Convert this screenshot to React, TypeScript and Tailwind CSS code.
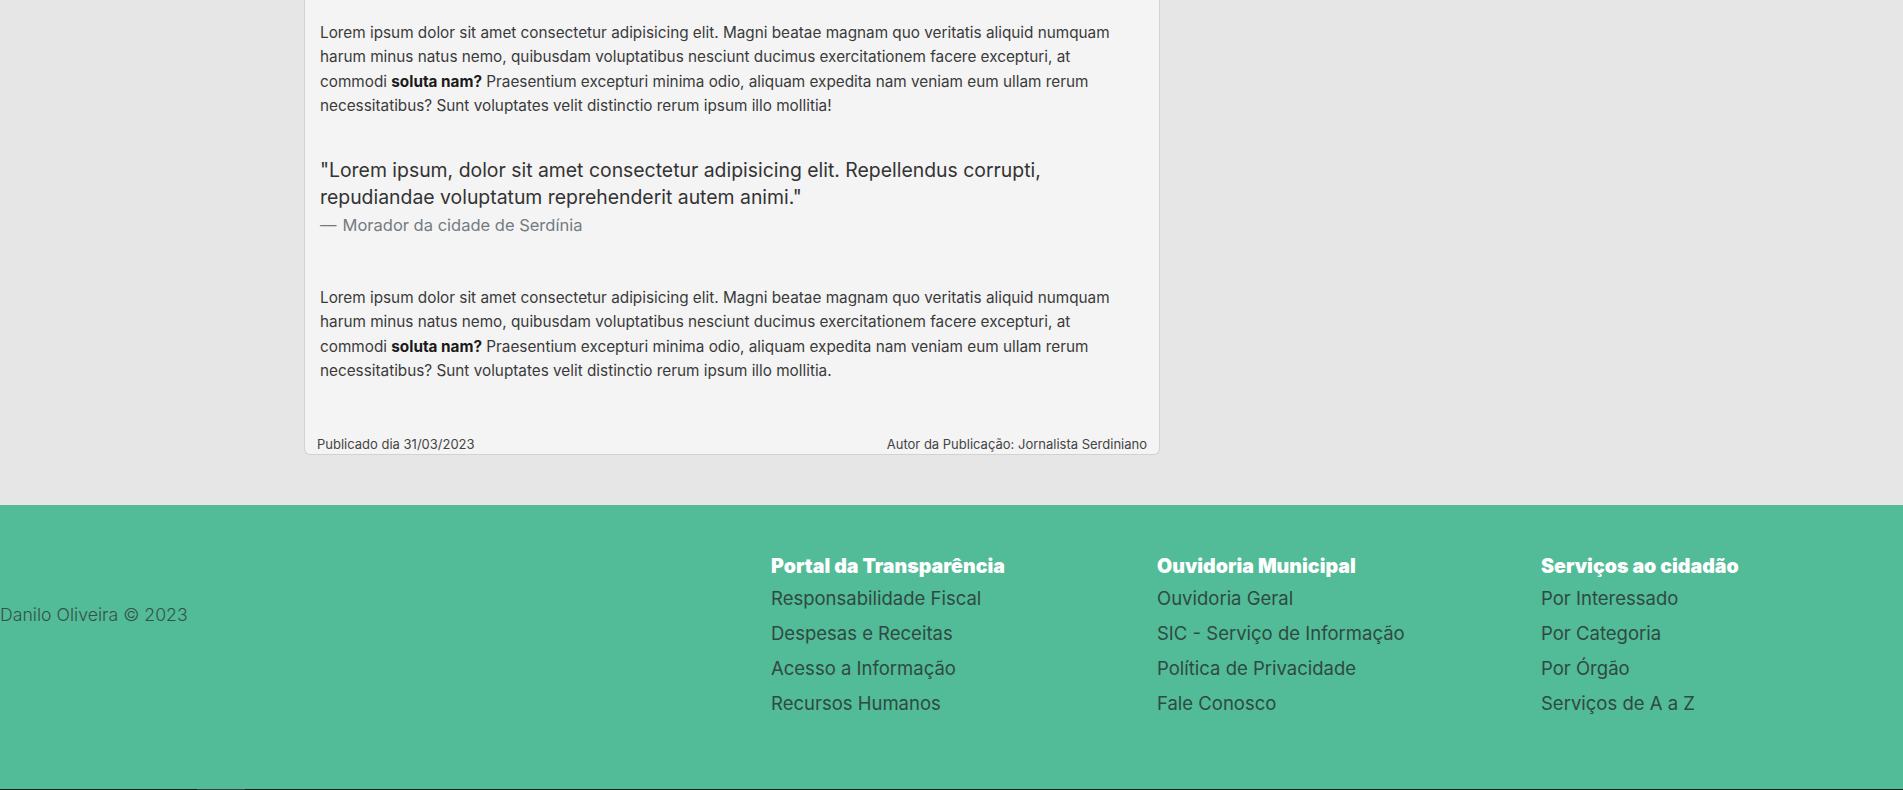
const lorem1 = "Lorem ipsum dolor sit amet consectetur adipisicing elit. Magni beatae magnam quo veritatis aliquid numquam harum minus natus nemo, quibusdam voluptatibus nesciunt ducimus exercitationem facere excepturi, at commodi";
const lorem2 = "Praesentium excepturi minima odio, aliquam expedita nam veniam eum ullam rerum necessitatibus? Sunt voluptates velit distinctio rerum ipsum illo mollitia";

const columns = [
  {
    title: "Portal da Transparência",
    links: ["Responsabilidade Fiscal", "Despesas e Receitas", "Acesso a Informação", "Recursos Humanos"],
  },
  {
    title: "Ouvidoria Municipal",
    links: ["Ouvidoria Geral", "SIC - Serviço de Informação", "Política de Privacidade", "Fale Conosco"],
  },
  {
    title: "Serviços ao cidadão",
    links: ["Por Interessado", "Por Categoria", "Por Órgão", "Serviços de A a Z"],
  },
];

function Paragraph({ end }: { end: string }) {
  return (
    <p className="pr-[18px] text-[15.3px] leading-[24.3px] text-[#3a3a3a]">
      {lorem1} <strong className="font-bold text-[#1a1a1a]">soluta nam?</strong> {lorem2}
      {end}
    </p>
  );
}

export default function App() {
  return (
    <div className="min-h-screen bg-[#e6e6e6] font-['Inter',sans-serif] flex flex-col">
      <main className="pl-[304px] pb-[50px]">
        <article className="w-[856px] bg-[#f4f4f4] border border-t-0 border-[#d2d2d2] rounded-b-[6px] px-[15px] pt-[21px] pb-[1px]">
          <Paragraph end="!" />
          <blockquote className="mt-[39px]">
            <p className="text-[19.4px] leading-[27px] text-[#333]">
              "Lorem ipsum, dolor sit amet consectetur adipisicing elit. Repellendus corrupti, repudiandae voluptatum reprehenderit autem animi."
            </p>
            <footer className="mt-[2px] text-[16.5px] leading-[24px] text-[#737b82]">
              <span className="mr-[6px]">—</span>Morador da cidade de Serdínia
            </footer>
          </blockquote>
          <div className="mt-[49px]">
            <Paragraph end="." />
          </div>
          <div className="mt-[52px] -mx-[3px] flex justify-between text-[13px] leading-[18px] text-[#444]">
            <span>Publicado dia 31/03/2023</span>
            <span>Autor da Publicação: Jornalista Serdiniano</span>
          </div>
        </article>
      </main>

      <footer className="h-[284px] bg-[#52bb97] grid grid-cols-[771px_386px_384px_1fr]">
        <div className="pt-[97px] text-[17.7px] leading-[26px] font-light text-[#35524a]">
          Danilo Oliveira © 2023
        </div>
        {columns.map((col) => (
          <div key={col.title} className="pt-[48px] flex flex-col">
            <h3 className="text-[19.6px] leading-[26px] font-black text-white mb-[2px]">{col.title}</h3>
            <ul>
              {col.links.map((link) => (
                <li key={link} className="text-[18.5px] leading-[35px] text-[#2f4a42]">
                  {link}
                </li>
              ))}
            </ul>
          </div>
        ))}
      </footer>
      <div className="h-px bg-[#0b1f18] flex">
        <div className="ml-[197px] w-[48px] bg-[#3a3f3d]" />
      </div>
    </div>
  );
}
